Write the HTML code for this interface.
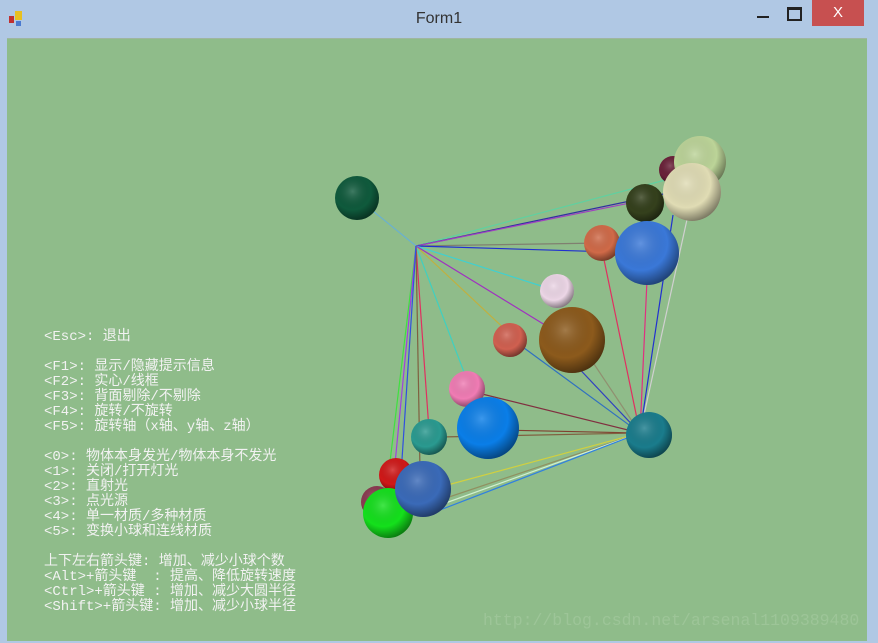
<!DOCTYPE html>
<html><head><meta charset="utf-8"><style>
body{margin:0;width:878px;height:643px;background:#b0c8e4;position:relative;overflow:hidden;font-family:"Liberation Sans",sans-serif}
#title{position:absolute;left:0;top:0;width:878px;height:38px;text-align:center;line-height:38px;font-size:16px;color:#333}
#client{position:absolute;left:7px;top:38px;width:860px;height:602px;background:#8fbc8a;border-top:1px solid #9fb6a0;overflow:hidden}
#close{position:absolute;left:812px;top:0;width:52px;height:26px;background:#c75050;color:#fff;text-align:center;line-height:26px;font-size:15px}
.txt{position:absolute;left:37px;top:291px;color:#f2f2f2;font-family:"Liberation Mono","WenQuanYi Zen Hei","Noto Sans CJK SC",monospace;font-size:14px;line-height:15px;white-space:pre;letter-spacing:0px}
</style></head><body>
<div id="title">Form1</div>
<svg style="position:absolute;left:8px;top:10px" width="20" height="18"><rect x="7" y="1" width="7" height="9" fill="#e8c020"/><rect x="1" y="6" width="5" height="7" fill="#c03030"/><rect x="8" y="11" width="5" height="5" fill="#4a7ad0"/></svg>
<div style="position:absolute;left:757px;top:16px;width:12px;height:2px;background:#222"></div>
<div style="position:absolute;left:787px;top:7px;width:11px;height:9px;border:2px solid #222;border-top-width:3px"></div>
<div id="close">X</div>
<div id="client"><div class="txt">&lt;Esc&gt;: 退出

&lt;F1&gt;: 显示/隐藏提示信息
&lt;F2&gt;: 实心/线框
&lt;F3&gt;: 背面剔除/不剔除
&lt;F4&gt;: 旋转/不旋转
&lt;F5&gt;: 旋转轴（x轴、y轴、z轴）

&lt;0&gt;: 物体本身发光/物体本身不发光
&lt;1&gt;: 关闭/打开灯光
&lt;2&gt;: 直射光
&lt;3&gt;: 点光源
&lt;4&gt;: 单一材质/多种材质
&lt;5&gt;: 变换小球和连线材质

上下左右箭头键: 增加、减少小球个数
&lt;Alt&gt;+箭头键  : 提高、降低旋转速度
&lt;Ctrl&gt;+箭头键 : 增加、减少大圆半径
&lt;Shift&gt;+箭头键: 增加、减少小球半径</div>
<div style="position:absolute;left:476px;top:572px;color:#9dc598;font-family:'Liberation Mono',monospace;font-size:16.5px;white-space:nowrap">http://blog.csdn.net/arsenal1109389480</div>
</div>
<svg style="position:absolute;left:0;top:0" width="878" height="643">
<defs>
<radialGradient id="g" cx="0.4" cy="0.35" r="0.7"><stop offset="0" stop-color="#fff" stop-opacity="0.2"/><stop offset="0.6" stop-color="#000" stop-opacity="0"/><stop offset="1" stop-color="#000" stop-opacity="0.5"/></radialGradient>
</defs>
<g stroke-width="1.2" fill="none">
<line x1="416" y1="246" x2="357" y2="198" stroke="#6ab0d0"/>
<line x1="416" y1="246" x2="673" y2="178" stroke="#60d0a0"/>
<line x1="416" y1="246" x2="692" y2="188" stroke="#3030a0"/>
<line x1="416" y1="246" x2="645" y2="200" stroke="#a040c0"/>
<line x1="416" y1="246" x2="602" y2="243" stroke="#808070"/>
<line x1="416" y1="246" x2="647" y2="253" stroke="#2030d0"/>
<line x1="416" y1="246" x2="557" y2="291" stroke="#40d0d0"/>
<line x1="416" y1="246" x2="510" y2="334" stroke="#c0b040"/>
<line x1="416" y1="246" x2="545" y2="325" stroke="#a030c0"/>
<line x1="416" y1="246" x2="467" y2="380" stroke="#40d0c0"/>
<line x1="416" y1="246" x2="429" y2="430" stroke="#e03060"/>
<line x1="416" y1="246" x2="420" y2="470" stroke="#806040"/>
<line x1="416" y1="246" x2="386" y2="495" stroke="#40e040"/>
<line x1="416" y1="246" x2="392" y2="495" stroke="#a040e0"/>
<line x1="416" y1="246" x2="400" y2="490" stroke="#3050e0"/>
<line x1="640" y1="433" x2="602" y2="250" stroke="#e03060"/>
<line x1="640" y1="433" x2="647" y2="280" stroke="#e03080"/>
<line x1="640" y1="433" x2="673" y2="215" stroke="#2030d0"/>
<line x1="640" y1="433" x2="688" y2="215" stroke="#d0d0d0"/>
<line x1="640" y1="433" x2="571" y2="360" stroke="#3040c0"/>
<line x1="640" y1="433" x2="590" y2="358" stroke="#909070"/>
<line x1="640" y1="433" x2="520" y2="345" stroke="#3070c0"/>
<line x1="640" y1="433" x2="478" y2="393" stroke="#803040"/>
<line x1="640" y1="433" x2="500" y2="430" stroke="#804030"/>
<line x1="640" y1="433" x2="440" y2="437" stroke="#806040"/>
<line x1="640" y1="433" x2="440" y2="487" stroke="#d0d040"/>
<line x1="640" y1="433" x2="440" y2="500" stroke="#909060"/>
<line x1="640" y1="433" x2="440" y2="505" stroke="#d0f0d0"/>
<line x1="640" y1="433" x2="440" y2="510" stroke="#3080e0"/>
</g>
<g>
<circle cx="357" cy="198" r="22" fill="#0f5a3c"/><circle cx="357" cy="198" r="22" fill="url(#g)"/>
<circle cx="673" cy="170" r="14" fill="#6a2038"/><circle cx="673" cy="170" r="14" fill="url(#g)"/>
<circle cx="700" cy="162" r="26" fill="#bcd498"/><circle cx="700" cy="162" r="26" fill="url(#g)"/>
<circle cx="645" cy="203" r="19" fill="#34401c"/><circle cx="645" cy="203" r="19" fill="url(#g)"/>
<circle cx="692" cy="192" r="29" fill="#e0dcb4"/><circle cx="692" cy="192" r="29" fill="url(#g)"/>
<circle cx="602" cy="243" r="18" fill="#d06a48"/><circle cx="602" cy="243" r="18" fill="url(#g)"/>
<circle cx="647" cy="253" r="32" fill="#3a78d8"/><circle cx="647" cy="253" r="32" fill="url(#g)"/>
<circle cx="557" cy="291" r="17" fill="#ecd6e6"/><circle cx="557" cy="291" r="17" fill="url(#g)"/>
<circle cx="510" cy="340" r="17" fill="#d06050"/><circle cx="510" cy="340" r="17" fill="url(#g)"/>
<circle cx="572" cy="340" r="33" fill="#8c5a1c"/><circle cx="572" cy="340" r="33" fill="url(#g)"/>
<circle cx="467" cy="389" r="18" fill="#f07cb4"/><circle cx="467" cy="389" r="18" fill="url(#g)"/>
<circle cx="429" cy="437" r="18" fill="#2a9a90"/><circle cx="429" cy="437" r="18" fill="url(#g)"/>
<circle cx="488" cy="428" r="31" fill="#0a7ee8"/><circle cx="488" cy="428" r="31" fill="url(#g)"/>
<circle cx="649" cy="435" r="23" fill="#1a7c8c"/><circle cx="649" cy="435" r="23" fill="url(#g)"/>
<circle cx="396" cy="475" r="17" fill="#d01818"/><circle cx="396" cy="475" r="17" fill="url(#g)"/>
<circle cx="377" cy="502" r="16" fill="#8a3a50"/><circle cx="377" cy="502" r="16" fill="url(#g)"/>
<circle cx="388" cy="513" r="25" fill="#14e01c"/><circle cx="388" cy="513" r="25" fill="url(#g)"/>
<circle cx="423" cy="489" r="28" fill="#3a6ab8"/><circle cx="423" cy="489" r="28" fill="url(#g)"/>
</g>
</svg>
</body></html>
